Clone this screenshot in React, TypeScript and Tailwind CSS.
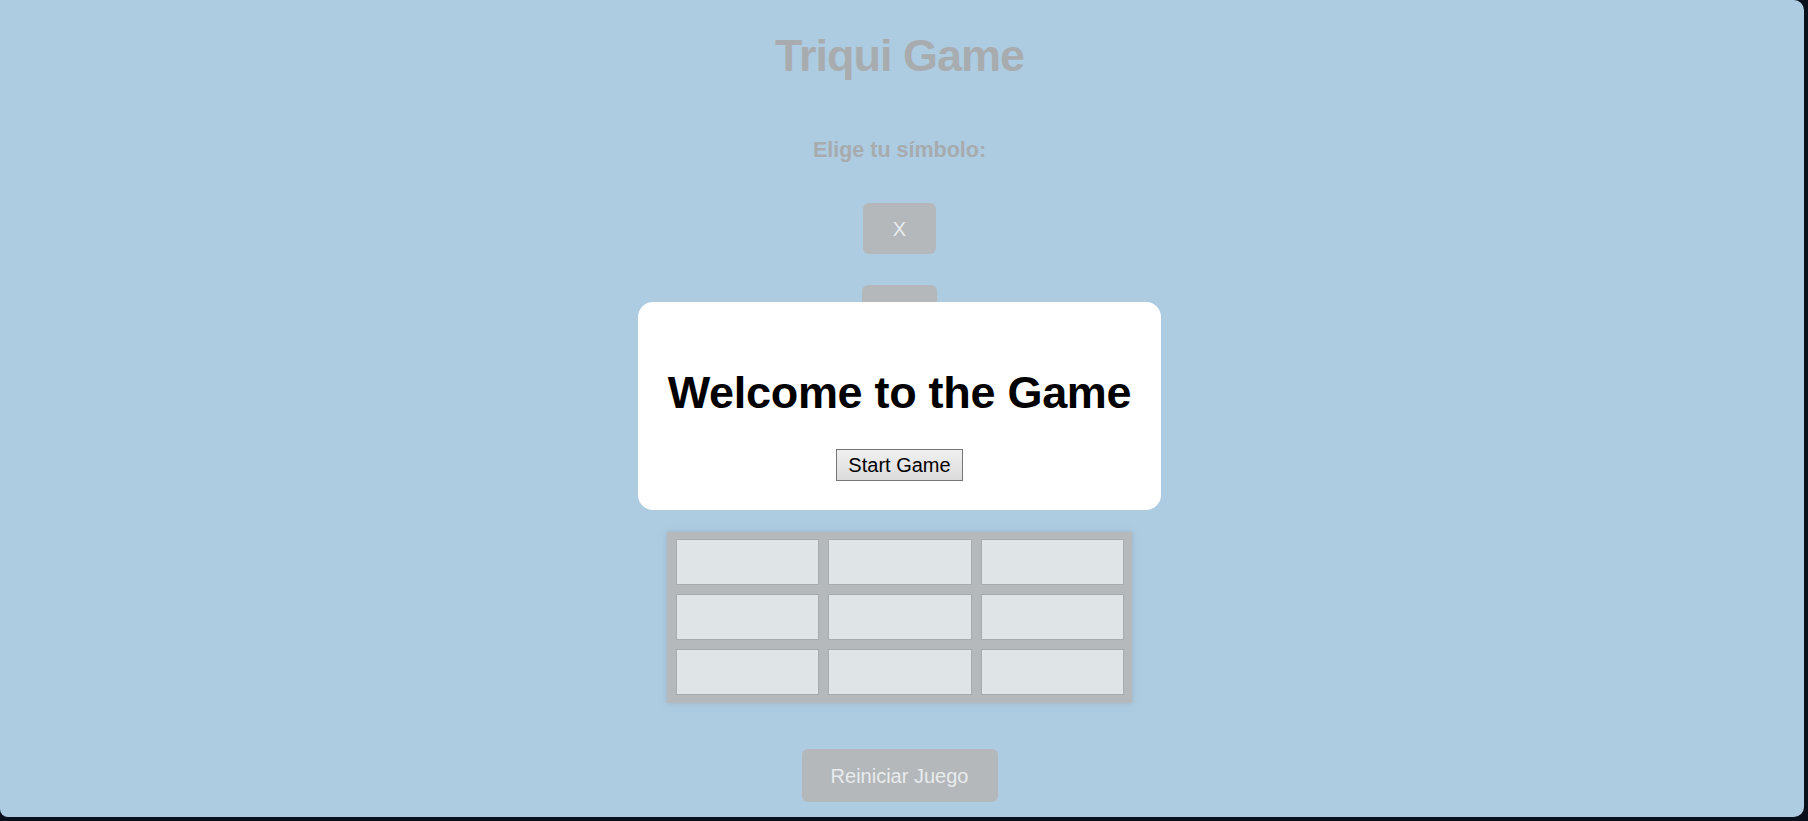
import React from "react";

export default function App() {
  const cells = Array.from({ length: 9 });
  return (
    <div className="w-[1808px] h-[821px] bg-[#0a0f1c] overflow-hidden font-['Liberation_Sans',Arial,sans-serif]">
      <div className="relative w-[1804px] h-[817px] bg-[#adcce2] rounded-tr-[10px] rounded-br-[10px] rounded-bl-[8px] flex flex-col items-start">
        <div className="w-[1799px] flex flex-col items-center">
          <h1 className="mt-[29px] text-[45px] leading-[54px] font-bold tracking-[-1px] text-[#a8acaf]">
            Triqui Game
          </h1>
          <p className="mt-[54px] text-[21.5px] leading-[26px] font-bold text-[#a7abae]">
            Elige tu símbolo:
          </p>
          <button className="mt-[40px] w-[73px] h-[51px] rounded-[6px] bg-[#b5b8bb] text-[#e8ebed] text-[20px] flex items-center justify-center">
            X
          </button>
          <button className="mt-[31px] w-[75px] h-[51px] rounded-[6px] bg-[#b5b8bb] text-[#e8ebed] text-[20px] flex items-center justify-center">
            O
          </button>
          <div className="mt-[196px] w-[465px] h-[171px] bg-[#b5b9bc] pt-[7px] pr-[8px] pb-[8px] pl-[9px] grid grid-cols-3 gap-[9px] shadow-[0_0_6px_rgba(150,160,170,0.6)]">
            {cells.map((_, i) => (
              <div key={i} className="bg-[#dfe4e7] border border-[#a6abae]" />
            ))}
          </div>
          <button className="mt-[46px] w-[196px] h-[53px] rounded-[6px] bg-[#b5b8bb] text-[#e8ebed] text-[20px] flex items-center justify-center">
            Reiniciar Juego
          </button>
        </div>

        <div className="absolute left-[638px] top-[302px] w-[523px] h-[208px] bg-white rounded-[15px] flex flex-col items-center">
          <h2 className="mt-[64px] text-[45px] leading-[54px] font-bold tracking-[-0.3px] whitespace-nowrap text-black">
            Welcome to the Game
          </h2>
          <button className="mt-[29px] w-[127px] h-[32px] border border-[#767676] bg-gradient-to-b from-[#f0f0f0] to-[#dcdcdc] text-[20px] text-black flex items-center justify-center">
            Start Game
          </button>
        </div>
      </div>
    </div>
  );
}
